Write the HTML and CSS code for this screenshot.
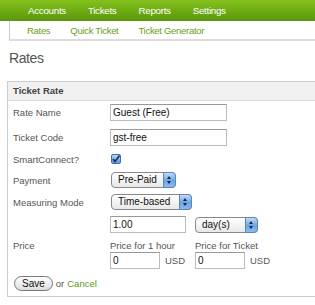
FILE: index.html
```html
<!DOCTYPE html>
<html lang="en">
<head>
    <meta charset="UTF-8">
    <title>Rates</title>
    <link rel="stylesheet" href="styles.css">
</head>
<body>
    <div class="topnav">
        <a href="#">Accounts</a>
        <a href="#">Tickets</a>
        <a href="#">Reports</a>
        <a href="#">Settings</a>
    </div>
    <div class="subnav">
        <a href="#">Rates</a>
        <a href="#">Quick Ticket</a>
        <a href="#">Ticket Generator</a>
    </div>

    <h1>Rates</h1>

    <div class="panel">
        <div class="panel-head">Ticket Rate</div>
        <div class="form">
            <div class="row row-input">
                <label>Rate Name</label>
                <input class="text wide" type="text" value="Guest (Free)">
            </div>
            <div class="row row-input">
                <label>Ticket Code</label>
                <input class="text wide" type="text" value="gst-free">
            </div>
            <div class="row row-check">
                <label>SmartConnect?</label>
                <span class="checkbox">
                    <svg width="8" height="8" viewBox="0 0 8 8"><path d="M1 4 L3 6.5 L7.5 0.5" fill="none" stroke="#1a2a50" stroke-width="1.6"/></svg>
                </span>
            </div>
            <div class="row row-select">
                <label>Payment</label>
                <span class="select" style="width: 65px">Pre-Paid<span class="arrows"></span></span>
            </div>
            <div class="row row-select">
                <label>Measuring Mode</label>
                <span class="select" style="width: 81px">Time-based<span class="arrows"></span></span>
            </div>
            <div class="row row-duration">
                <label></label>
                <input class="text mid" type="text" value="1.00">
                <span class="select unit-select" style="width: 63px">day(s)<span class="arrows"></span></span>
            </div>
            <div class="row row-price">
                <label>Price</label>
                <div class="price">
                    <div class="price-cap">Price for 1 hour</div>
                    <input class="text small" type="text" value="0"><span class="unit">USD</span>
                </div>
                <div class="price">
                    <div class="price-cap">Price for Ticket</div>
                    <input class="text small" type="text" value="0"><span class="unit">USD</span>
                </div>
            </div>
            <div class="actions">
                <button class="save">Save</button> or <a href="#">Cancel</a>
            </div>
        </div>
    </div>
</body>
</html>
```

FILE: styles.css
```css
body {
    margin: 0;
    font-family: "Liberation Sans", Arial, sans-serif;
    font-size: 9.5px;
    color: #555;
    background: #fff;
}
a {
    text-decoration: none;
}
.topnav {
    height: 21px;
    display: flex;
    align-items: center;
    padding-left: 28px;
    gap: 22px;
    background: linear-gradient(#86c11c, #6aa812 60%, #5b960c);
}
.topnav a {
    color: #fff;
    font-size: 9.8px;
    letter-spacing: -0.3px;
}
.subnav {
    margin-left: 9px;
    height: 18px;
    display: flex;
    align-items: center;
    padding-left: 17px;
    gap: 20px;
    border-left: 1px solid #ccc;
    border-bottom: 2px solid #ddd;
}
.subnav a {
    color: #6a9e1c;
    font-size: 9.5px;
    letter-spacing: -0.3px;
}
h1 {
    margin: 8px 0 0 9px;
    font-size: 14px;
    font-weight: normal;
    letter-spacing: -0.4px;
    color: #555;
    line-height: 18px;
}
.panel {
    margin: 14px 0 0 7px;
    border: 1px solid #ccc;
    border-right: none;
    height: 214px;
}
.panel-head {
    height: 18px;
    line-height: 18px;
    padding-left: 5px;
    background: #f0f0f0;
    border-bottom: 1px solid #ddd;
    font-weight: bold;
    color: #444;
}
.form {
    padding: 3px 0 0 5px;
}
.row {
    display: flex;
    align-items: center;
}
.row label {
    width: 97px;
    flex: none;
}
.row-input {
    height: 17px;
    margin-bottom: 8px;
}
.row-check {
    height: 10px;
    margin-bottom: 8px;
}
.row-select {
    height: 16px;
    margin-bottom: 6px;
}
.row-duration {
    height: 17px;
    margin: 6px 0 7px;
}
.row-price {
    align-items: flex-start;
}
.text {
    box-sizing: border-box;
    height: 17px;
    border: 1px solid #bbb;
    border-top-color: #999;
    padding: 0 2px;
    font-family: "Liberation Sans", Arial, sans-serif;
    font-size: 10px;
    color: #111;
    margin: 0;
}
.wide {
    width: 117px;
}
.mid {
    width: 76px;
}
.small {
    width: 50px;
}
.checkbox {
    box-sizing: border-box;
    width: 10px;
    height: 10px;
    margin-left: 1px;
    border: 1px solid #3c6fb0;
    border-radius: 2px;
    background: linear-gradient(#b8d4f4, #5d9be0);
    display: flex;
    align-items: center;
    justify-content: center;
}
.select {
    box-sizing: border-box;
    position: relative;
    height: 16px;
    line-height: 14px;
    padding-left: 6px;
    margin-left: 1px;
    border: 1px solid #888;
    border-radius: 4px;
    background: linear-gradient(#fff, #e8e8e8);
    color: #111;
    font-size: 10px;
}
.select.unit-select {
    margin-left: 9px;
}
.arrows {
    position: absolute;
    right: -1px;
    top: -1px;
    width: 13px;
    height: 16px;
    border-radius: 0 4px 4px 0;
    background: linear-gradient(#c4dcf6, #6aa4e4 55%, #8bbcf0);
    border: 1px solid #5b86bd;
    box-sizing: border-box;
}
.arrows::before, .arrows::after {
    content: "";
    position: absolute;
    left: 3px;
    border-left: 2.5px solid transparent;
    border-right: 2.5px solid transparent;
}
.arrows::before {
    top: 3px;
    border-bottom: 3px solid #1b2a44;
}
.arrows::after {
    top: 8px;
    border-top: 3px solid #1b2a44;
}
.price {
    width: 85px;
}
.price-cap {
    height: 11px;
    line-height: 11px;
    margin-bottom: 1px;
}
.unit {
    margin-left: 5px;
}
.actions {
    margin-top: 7px;
    display: flex;
    align-items: center;
    gap: 3px;
}
.save {
    height: 15px;
    padding: 0 7px;
    margin-left: 1px;
    border: 1px solid #777;
    border-radius: 8px;
    background: linear-gradient(#fff, #ddd);
    font-family: "Liberation Sans", Arial, sans-serif;
    font-size: 10px;
    color: #111;
}
.actions a {
    color: #5a9a18;
}
```
